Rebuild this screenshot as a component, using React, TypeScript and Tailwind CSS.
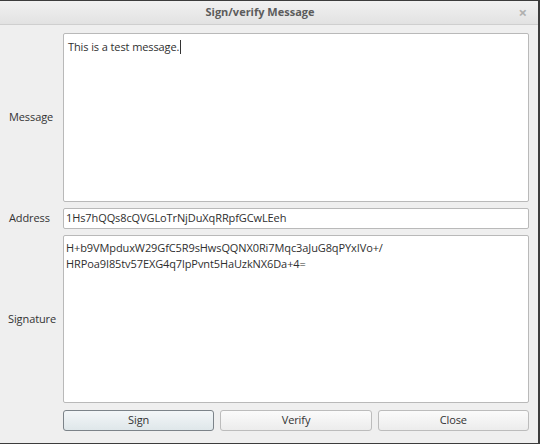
export default function App() {
  return (
    <div className="h-[444px] w-[540px] overflow-hidden bg-[#3c3c3c] pt-px font-['Open_Sans',sans-serif] text-[11px] tracking-[-0.1px] text-[#2f2f2f]">
      <div className="flex h-[442px] w-[538px] flex-col bg-[#efefef]">
        {/* title bar */}
        <div className="relative flex h-[24px] shrink-0 items-center justify-center border-b border-[#cfcfcf] bg-gradient-to-b from-[#f1f1f1] to-[#e2e2e2] pr-[18px]">
          <span className="text-[11px] font-bold tracking-normal text-[#5c5c5c]">Sign/verify Message</span>
          <span className="absolute right-[11px] top-[3px] text-[15px] font-bold leading-[16px] text-[#b0b0b0]">×</span>
        </div>

        <div className="grid flex-1 grid-cols-[55px_1fr] grid-rows-[169px_21px_168px_22px] gap-y-[6px] pl-[8px] pr-[9px] pt-[8px]">
          <div className="flex items-center pl-px text-[#333]">Message</div>
          <div className="rounded-[2px] border border-[#b9b9b9] bg-white px-[4px] py-[3px]">
            This is a test message.
            <span className="ml-px inline-block h-[14px] w-px translate-y-[3px] bg-[#333]" />
          </div>

          <div className="flex items-center pl-px text-[#333]">Address</div>
          <div className="flex items-center rounded-[2px] border border-[#b9b9b9] bg-white px-[2px]">
            1Hs7hQQs8cQVGLoTrNjDuXqRRpfGCwLEeh
          </div>

          <div className="flex items-center text-[#333]">Signature</div>
          <div className="rounded-[2px] border border-[#b9b9b9] bg-white px-[2px] py-[4px] leading-[16px]">
            <div>H+b9VMpduxW29GfC5R9sHwsQQNX0Ri7Mqc3aJuG8qPYxIVo+/</div>
            <div>HRPoa9I85tv57EXG4q7lpPvnt5HaUzkNX6Da+4=</div>
          </div>

          <div className="mt-px" />
          <div className="mt-px grid grid-cols-3 gap-[6px]">
            <button className="rounded-[3px] border border-[#7c8389] bg-gradient-to-b from-[#f3f6f8] to-[#dfe7ea] text-[#333]">
              Sign
            </button>
            <button className="rounded-[3px] border border-[#bcbcbc] bg-gradient-to-b from-[#fbfbfb] to-[#ececec] text-[#333]">
              Verify
            </button>
            <button className="rounded-[3px] border border-[#bcbcbc] bg-gradient-to-b from-[#fbfbfb] to-[#ececec] text-[#333]">
              Close
            </button>
          </div>
        </div>
      </div>
    </div>
  );
}
